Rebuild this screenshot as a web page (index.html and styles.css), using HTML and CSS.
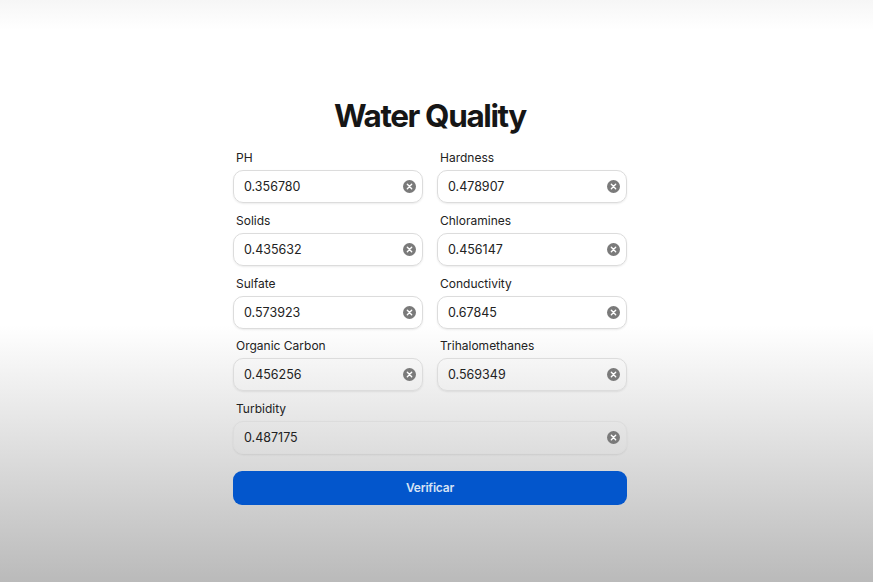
FILE: index.html
```html
<!DOCTYPE html>
<html lang="en">
<head>
<meta charset="utf-8">
<title>Water Quality</title>
<link rel="stylesheet" href="styles.css">
</head>
<body>
<main class="page">
  <h1 class="title">Water Quality</h1>
  <form class="form">
    <div class="field">
      <label class="label">PH</label>
      <div class="input"><span class="value">0.356780</span><svg class="clear" viewBox="0 0 12 12"><circle cx="6" cy="6" r="6"/><path d="M4 4L8 8M8 4L4 8"/></svg></div>
    </div>
    <div class="field">
      <label class="label">Hardness</label>
      <div class="input"><span class="value">0.478907</span><svg class="clear" viewBox="0 0 12 12"><circle cx="6" cy="6" r="6"/><path d="M4 4L8 8M8 4L4 8"/></svg></div>
    </div>
    <div class="field">
      <label class="label">Solids</label>
      <div class="input"><span class="value">0.435632</span><svg class="clear" viewBox="0 0 12 12"><circle cx="6" cy="6" r="6"/><path d="M4 4L8 8M8 4L4 8"/></svg></div>
    </div>
    <div class="field">
      <label class="label">Chloramines</label>
      <div class="input"><span class="value">0.456147</span><svg class="clear" viewBox="0 0 12 12"><circle cx="6" cy="6" r="6"/><path d="M4 4L8 8M8 4L4 8"/></svg></div>
    </div>
    <div class="field">
      <label class="label">Sulfate</label>
      <div class="input"><span class="value">0.573923</span><svg class="clear" viewBox="0 0 12 12"><circle cx="6" cy="6" r="6"/><path d="M4 4L8 8M8 4L4 8"/></svg></div>
    </div>
    <div class="field">
      <label class="label">Conductivity</label>
      <div class="input"><span class="value">0.67845</span><svg class="clear" viewBox="0 0 12 12"><circle cx="6" cy="6" r="6"/><path d="M4 4L8 8M8 4L4 8"/></svg></div>
    </div>
    <div class="field">
      <label class="label">Organic Carbon</label>
      <div class="input"><span class="value">0.456256</span><svg class="clear" viewBox="0 0 12 12"><circle cx="6" cy="6" r="6"/><path d="M4 4L8 8M8 4L4 8"/></svg></div>
    </div>
    <div class="field">
      <label class="label">Trihalomethanes</label>
      <div class="input"><span class="value">0.569349</span><svg class="clear" viewBox="0 0 12 12"><circle cx="6" cy="6" r="6"/><path d="M4 4L8 8M8 4L4 8"/></svg></div>
    </div>
    <div class="field wide">
      <label class="label">Turbidity</label>
      <div class="input"><span class="value">0.487175</span><svg class="clear" viewBox="0 0 12 12"><circle cx="6" cy="6" r="6"/><path d="M4 4L8 8M8 4L4 8"/></svg></div>
    </div>
    <button type="button" class="button">Verificar</button>
  </form>
</main>
</body>
</html>
```
FILE: styles.css
```css
html, body {
  margin: 0;
  height: 100%;
}
body {
  font-family: Inter, "Noto Sans", "Liberation Sans", sans-serif;
  color: #1f1f1f;
  background: linear-gradient(to bottom, #f6f6f6 0px, #ffffff 30px, #ffffff 325px, #e6e6e6 420px, #bababa 582px);
  min-height: 582px;
}
.page {
  display: flex;
  flex-direction: column;
  align-items: center;
  padding-top: 96px;
  padding-right: 13px;
}
.title {
  margin: 0 0 14px;
  font-size: 31.5px;
  line-height: 40px;
  font-weight: 700;
  letter-spacing: -1.4px;
  color: #161616;
}
.form {
  width: 394px;
  display: grid;
  grid-template-columns: 190px 190px;
  column-gap: 14px;
  row-gap: 9.8px;
}
.field {
  display: flex;
  flex-direction: column;
  gap: 5px;
}
.field.wide {
  grid-column: 1 / 3;
}
.label {
  font-size: 12px;
  line-height: 15px;
  padding-left: 3px;
  color: #222;
}
.input {
  height: 33px;
  box-sizing: border-box;
  border: 1px solid #dcdcdc;
  border-radius: 10px;
  box-shadow: 0 1px 2px rgba(0, 0, 0, 0.08);
  display: flex;
  align-items: center;
  justify-content: space-between;
  padding: 0 6px 0 10px;
}
.value {
  font-size: 12.5px;
  color: #222;
}
.clear {
  width: 13px;
  height: 13px;
}
.clear circle {
  fill: #7a7a7a;
}
.clear path {
  stroke: #fff;
  stroke-width: 1.3;
  stroke-linecap: round;
}
.button {
  grid-column: 1 / 3;
  margin-top: 7px;
  height: 34px;
  border: none;
  border-radius: 9px;
  background: #0356cc;
  color: #d6e2f5;
  font-family: Inter, "Noto Sans", "Liberation Sans", sans-serif;
  font-size: 12px;
  font-weight: 600;
  letter-spacing: -0.2px;
}
```
